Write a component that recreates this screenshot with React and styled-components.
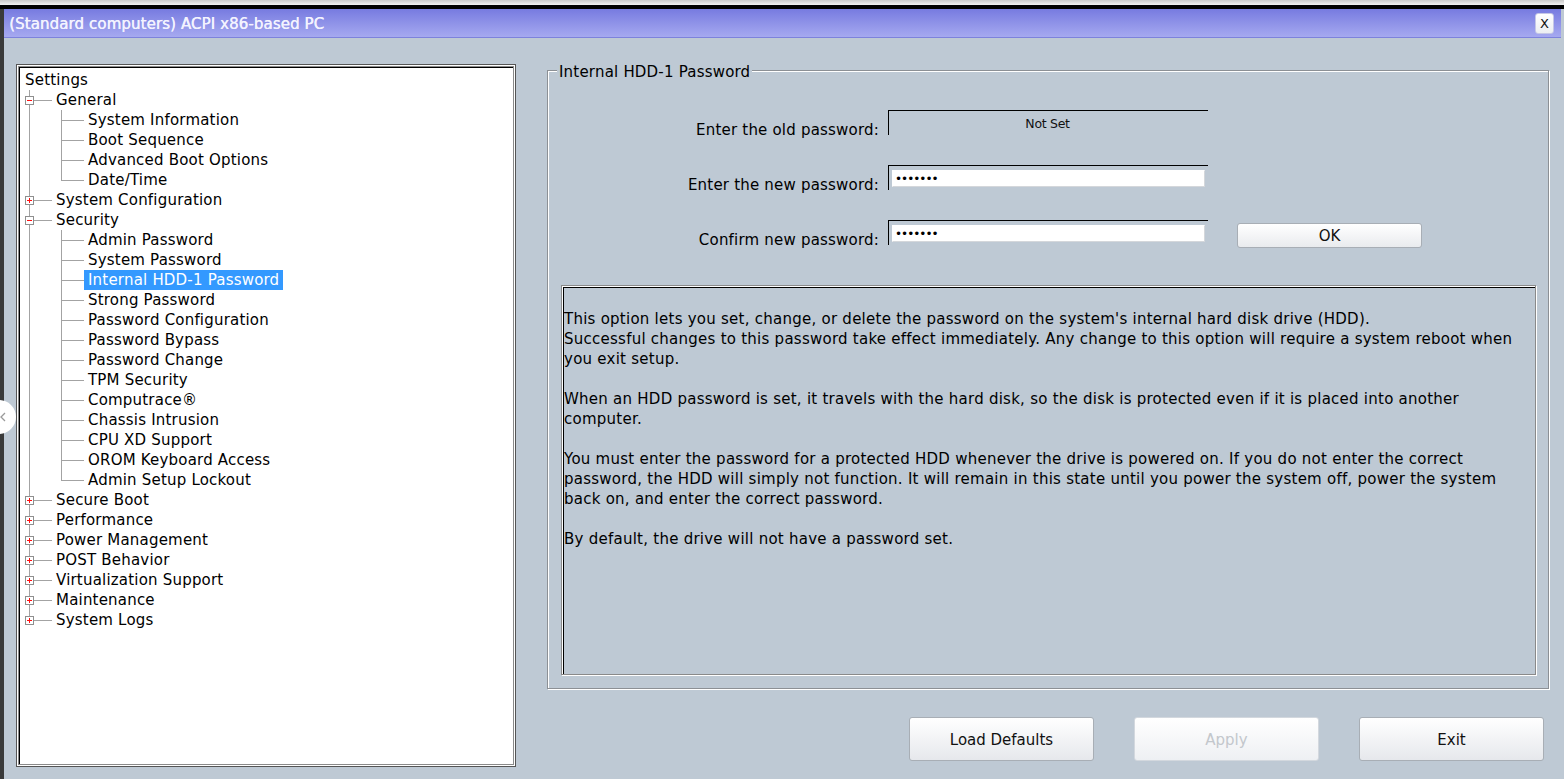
import React from "react";
import styled, { createGlobalStyle } from "styled-components";

const Global = createGlobalStyle`
  html, body { margin: 0; padding: 0; }
  body {
    background: #3a3a3a;
    font-family: "DejaVu Sans", "Liberation Sans", sans-serif;
    overflow: hidden;
  }
`;

const FONT = `"DejaVu Sans", "Liberation Sans", sans-serif`;

const Page = styled.div`
  position: relative;
  width: 1564px;
  height: 779px;
  display: flex;
  flex-direction: column;
  background: #3a3a3a;
`;

const TopEdge = styled.div`
  height: 5px;
  background: linear-gradient(#c9c9c9, #f2f2f2);
`;

const Band = styled.div`
  height: 4px;
  background: #000;
`;

const Window = styled.div`
  flex: 1;
  margin-left: 4px;
  background: #bec9d4;
  display: flex;
  flex-direction: column;
  min-height: 0;
`;

const TitleBar = styled.div`
  height: 28px;
  margin-right: 3px;
  border-bottom: 1px solid #7d82dc;
  background: linear-gradient(#777be0, #a6a9f0);
  display: flex;
  align-items: center;
  justify-content: space-between;
  padding: 0 7px 0 5px;
`;

const Title = styled.div`
  font-family: ${FONT};
  font-size: 15px;
  color: #f3f3ff;
  letter-spacing: 0.1px;
  padding-top: 1px;
  text-shadow: 0.4px 0 0 #f3f3ff;
`;

const CloseBtn = styled.button`
  width: 19px;
  height: 21px;
  margin-top: 1px;
  padding: 0;
  border: 1px solid #c5c7e6;
  border-radius: 3px;
  background: linear-gradient(#ffffff, #eceef2);
  font-family: ${FONT};
  font-size: 13px;
  color: #111;
  line-height: 19px;
  text-align: center;
`;

const Body = styled.div`
  flex: 1;
  display: flex;
  gap: 31px;
  padding: 26px 15px 12px 12px;
  min-height: 0;
`;

/* ---------- tree ---------- */

const TreeFrame = styled.div`
  width: 500px;
  box-sizing: border-box;
  border: 1px solid #555;
  padding: 1px;
  background: #fff;
  display: flex;
`;

const TreeRing = styled.div`
  flex: 1;
  border: 1px solid #8a8a8a;
  display: flex;
`;

const TreeContent = styled.div`
  flex: 1;
  border-top: 1px solid #000;
  border-left: 1px solid #000;
  background: #fff;
  padding-top: 2px;
`;

const Row = styled.div`
  height: 20px;
  display: flex;
  align-items: stretch;
`;

const Label = styled.span`
  display: inline-block;
  height: 20px;
  line-height: 20px;
  padding: 0 4px;
  margin-left: ${(p) => (p.$root ? "1px" : "0")};
  font-family: ${FONT};
  font-size: 15px;
  letter-spacing: 0.2px;
  white-space: nowrap;
  color: ${(p) => (p.$selected ? "#fff" : "#000")};
  background: ${(p) => (p.$selected ? "#3399ff" : "transparent")};
`;

const LINE = "#a3a3a3";
const RED = "#ff1010";

function Connector({ level, expander, last }) {
  if (level === 1) {
    return (
      <svg width="32" height="20" shapeRendering="crispEdges" style={{ flex: "none" }}>
        <line x1="9.5" y1="0" x2="9.5" y2={last ? 10.5 : 20} stroke={LINE} />
        <line x1="9.5" y1="10.5" x2="32" y2="10.5" stroke={LINE} />
        <rect x="5.5" y="6.5" width="8" height="8" fill="#fff" stroke="#8f8f8f" />
        <rect x="7" y="10" width="5" height="1" fill={RED} />
        {expander === "plus" && <rect x="9" y="8" width="1" height="5" fill={RED} />}
      </svg>
    );
  }
  return (
    <svg width="64" height="20" shapeRendering="crispEdges" style={{ flex: "none" }}>
      <line x1="9.5" y1="0" x2="9.5" y2="20" stroke={LINE} />
      <line x1="41.5" y1="0" x2="41.5" y2={last ? 10.5 : 20} stroke={LINE} />
      <line x1="41.5" y1="10.5" x2="64" y2="10.5" stroke={LINE} />
    </svg>
  );
}

const tree = [
  { name: "General", children: ["System Information", "Boot Sequence", "Advanced Boot Options", "Date/Time"] },
  { name: "System Configuration" },
  {
    name: "Security",
    children: [
      "Admin Password",
      "System Password",
      "Internal HDD-1 Password",
      "Strong Password",
      "Password Configuration",
      "Password Bypass",
      "Password Change",
      "TPM Security",
      "Computrace®",
      "Chassis Intrusion",
      "CPU XD Support",
      "OROM Keyboard Access",
      "Admin Setup Lockout",
    ],
  },
  { name: "Secure Boot" },
  { name: "Performance" },
  { name: "Power Management" },
  { name: "POST Behavior" },
  { name: "Virtualization Support" },
  { name: "Maintenance" },
  { name: "System Logs" },
];

const SELECTED = "Internal HDD-1 Password";

function Tree() {
  const rows = [];
  rows.push(
    <Row key="root">
      <Label $root>Settings</Label>
    </Row>
  );
  tree.forEach((node, i) => {
    const last = i === tree.length - 1;
    rows.push(
      <Row key={node.name}>
        <Connector level={1} expander={node.children ? "minus" : "plus"} last={last} />
        <Label>{node.name}</Label>
      </Row>
    );
    (node.children || []).forEach((c, j) => {
      rows.push(
        <Row key={node.name + c}>
          <Connector level={2} last={j === node.children.length - 1} />
          <Label $selected={c === SELECTED}>{c}</Label>
        </Row>
      );
    });
  });
  return (
    <TreeFrame>
      <TreeRing>
        <TreeContent>{rows}</TreeContent>
      </TreeRing>
    </TreeFrame>
  );
}

/* ---------- right side ---------- */

const RightCol = styled.div`
  flex: 1;
  display: flex;
  flex-direction: column;
  padding: 6px 0 6px 0;
  min-width: 0;
`;

const Group = styled.section`
  flex: 1;
  display: flex;
  flex-direction: column;
  border: 1px solid #8c9095;
  box-shadow: 1px 1px 0 #fff, inset 1px 1px 0 #fff;
  min-height: 0;
`;

const Legend = styled.div`
  align-self: flex-start;
  margin: -8px 0 0 9px;
  padding: 0 2px;
  background: #bec9d4;
  font-family: ${FONT};
  font-size: 15px;
  letter-spacing: 0.2px;
  line-height: 18px;
  color: #000;
`;

const FormRow = styled.div`
  display: grid;
  grid-template-columns: 331px 320px 185px;
  column-gap: 9px;
  margin-top: ${(p) => p.$mt}px;
  height: 25px;
  align-items: start;
`;

const FieldLabel = styled.label`
  text-align: right;
  padding-top: 11px;
  font-family: ${FONT};
  font-size: 15px;
  letter-spacing: 0.2px;
  line-height: 18px;
  color: #000;
  white-space: nowrap;
`;

const FieldFrame = styled.div`
  height: 25px;
  box-sizing: border-box;
  border-top: 1px solid #000;
  border-left: 1px solid #000;
  display: flex;
  flex-direction: column;
  align-items: ${(p) => (p.$center ? "center" : "flex-start")};
`;

const StaticValue = styled.span`
  font-family: ${FONT};
  font-size: 12.5px;
  line-height: 14px;
  margin-top: 6px;
  margin-left: -2px;
  color: #111;
  letter-spacing: -0.3px;
`;

const PasswordInput = styled.input`
  margin: 4px 0 0 3px;
  width: 313px;
  height: 17px;
  box-sizing: border-box;
  border: 1px solid #fff;
  border-right-color: #d4d7db;
  border-bottom-color: #d4d7db;
  background: #fff;
  padding: 0 0 0 2px;
  font-family: ${FONT};
  font-size: 12px;
  letter-spacing: -1px;
  color: #000;
  outline: none;
`;

const OkButton = styled.button`
  margin-left: 20px;
  margin-top: 3px;
  width: 185px;
  height: 25px;
  border: 1px solid #a8aeb5;
  border-radius: 3px;
  background: linear-gradient(#ffffff, #e9ebee);
  font-family: ${FONT};
  font-size: 15px;
  color: #111;
  padding: 0;
`;

const DescOuter = styled.div`
  flex: 1;
  margin: 40px 12px 13px 13px;
  border: 1px solid #8a8a8a;
  box-shadow: 1px 1px 0 #fff, inset 1px 1px 0 #fff;
  padding: 1px 0 0 1px;
  display: flex;
  min-height: 0;
`;

const DescInner = styled.div`
  flex: 1;
  border-top: 1px solid #000;
  border-left: 1px solid #000;
  padding: 21px 0 0 0;
  font-family: ${FONT};
  font-size: 15px;
  letter-spacing: 0.25px;
  line-height: 20px;
  color: #000;
`;

const Para = styled.p`
  margin: 0 0 20px 0;
`;

const Line = styled.span`
  display: block;
  white-space: nowrap;
`;

const ButtonBar = styled.div`
  display: flex;
  justify-content: flex-end;
  gap: 40px;
  margin-top: 28px;
  padding-right: 5px;
`;

const ActionButton = styled.button`
  width: 185px;
  height: 44px;
  border: 1px solid ${(p) => (p.$disabled ? "#d3d8de" : "#a8aeb5")};
  border-radius: 3px;
  background: linear-gradient(#ffffff, ${(p) => (p.$disabled ? "#eef0f3" : "#e6e8ec")});
  font-family: ${FONT};
  font-size: 15px;
  color: ${(p) => (p.$disabled ? "#c3c7cc" : "#111")};
  padding: 2px 0 0 0;
`;

const Knob = styled.div`
  position: absolute;
  left: -18px;
  top: 400px;
  width: 34px;
  height: 34px;
  border-radius: 50%;
  background: #fff;
  display: flex;
  align-items: center;
  justify-content: flex-end;
  padding-right: 10px;
  box-sizing: border-box;
`;

const paragraphs = [
  [
    "This option lets you set, change, or delete the password on the system's internal hard disk drive (HDD).",
    "Successful changes to this password take effect immediately. Any change to this option will require a system reboot when",
    "you exit setup.",
  ],
  [
    "When an HDD password is set, it travels with the hard disk, so the disk is protected even if it is placed into another",
    "computer.",
  ],
  [
    "You must enter the password for a protected HDD whenever the drive is powered on. If you do not enter the correct",
    "password, the HDD will simply not function. It will remain in this state until you power the system off, power the system",
    "back on, and enter the correct password.",
  ],
  ["By default, the drive will not have a password set."],
];

export default function App() {
  return (
    <Page>
      <Global />
      <TopEdge />
      <Band />
      <Window>
        <TitleBar>
          <Title>(Standard computers) ACPI x86-based PC</Title>
          <CloseBtn>X</CloseBtn>
        </TitleBar>
        <Body>
          <Tree />
          <RightCol>
            <Group>
              <Legend>Internal HDD-1 Password</Legend>
              <FormRow $mt={29}>
                <FieldLabel>Enter the old password:</FieldLabel>
                <FieldFrame $center>
                  <StaticValue>Not Set</StaticValue>
                </FieldFrame>
              </FormRow>
              <FormRow $mt={30}>
                <FieldLabel>Enter the new password:</FieldLabel>
                <FieldFrame>
                  <PasswordInput type="password" defaultValue="1234567" readOnly />
                </FieldFrame>
              </FormRow>
              <FormRow $mt={30}>
                <FieldLabel>Confirm new password:</FieldLabel>
                <FieldFrame>
                  <PasswordInput type="password" defaultValue="1234567" readOnly />
                </FieldFrame>
                <OkButton>OK</OkButton>
              </FormRow>
              <DescOuter>
                <DescInner>
                  {paragraphs.map((p, i) => (
                    <Para key={i}>
                      {p.map((l, j) => (
                        <Line key={j}>{l}</Line>
                      ))}
                    </Para>
                  ))}
                </DescInner>
              </DescOuter>
            </Group>
            <ButtonBar>
              <ActionButton>Load Defaults</ActionButton>
              <ActionButton $disabled>Apply</ActionButton>
              <ActionButton>Exit</ActionButton>
            </ButtonBar>
          </RightCol>
        </Body>
      </Window>
      <Knob>
        <svg width="6" height="10" viewBox="0 0 6 10">
          <path d="M5 1 L1 5 L5 9" fill="none" stroke="#9a9a9a" strokeWidth="1.3" />
        </svg>
      </Knob>
    </Page>
  );
}
